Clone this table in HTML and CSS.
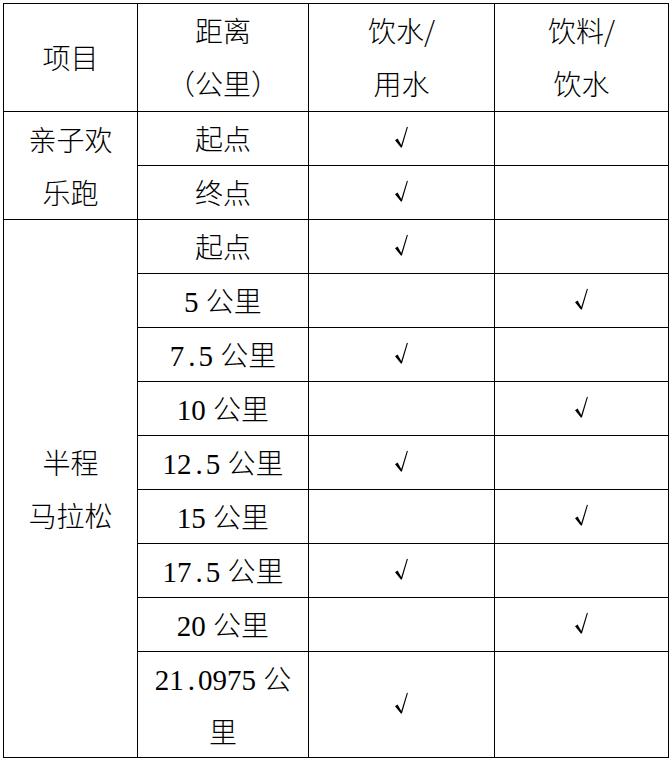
FILE: index.html
```html
<!DOCTYPE html>
<html lang="zh-CN">
<head>
<meta charset="utf-8">
<title>补给站</title>
<link rel="stylesheet" href="styles.css">
</head>
<body>
<svg class="defs" width="0" height="0" aria-hidden="true">
  <defs>
    <symbol id="tick" viewBox="0 0 15 22">
      <path d="M1 14.2 L3.6 12.6 L7.3 19 L12.9 0.8 L13.9 1.1 L7.9 21.6 L6.9 21.6 Z" fill="#000"/>
    </symbol>
  </defs>
</svg>
<table class="grid">
  <colgroup>
    <col class="c1"><col class="c2"><col class="c3"><col class="c4">
  </colgroup>
  <thead>
    <tr class="head">
      <th>项目</th>
      <th>距离<br>（公里）</th>
      <th>饮水/<br>用水</th>
      <th>饮料/<br>饮水</th>
    </tr>
  </thead>
  <tbody>
    <tr>
      <td rowspan="2">亲子欢<br>乐跑</td>
      <td>起点</td>
      <td><svg class="tick"><use href="#tick"/></svg></td>
      <td></td>
    </tr>
    <tr>
      <td>终点</td>
      <td><svg class="tick"><use href="#tick"/></svg></td>
      <td></td>
    </tr>
    <tr>
      <td rowspan="9">半程<br>马拉松</td>
      <td>起点</td>
      <td><svg class="tick"><use href="#tick"/></svg></td>
      <td></td>
    </tr>
    <tr>
      <td><span class="num">5 </span>公里</td>
      <td></td>
      <td><svg class="tick"><use href="#tick"/></svg></td>
    </tr>
    <tr>
      <td><span class="num">7<span class="dot">.</span>5 </span>公里</td>
      <td><svg class="tick"><use href="#tick"/></svg></td>
      <td></td>
    </tr>
    <tr>
      <td><span class="num">10 </span>公里</td>
      <td></td>
      <td><svg class="tick"><use href="#tick"/></svg></td>
    </tr>
    <tr>
      <td><span class="num">12<span class="dot">.</span>5 </span>公里</td>
      <td><svg class="tick"><use href="#tick"/></svg></td>
      <td></td>
    </tr>
    <tr>
      <td><span class="num">15 </span>公里</td>
      <td></td>
      <td><svg class="tick"><use href="#tick"/></svg></td>
    </tr>
    <tr>
      <td><span class="num">17<span class="dot">.</span>5 </span>公里</td>
      <td><svg class="tick"><use href="#tick"/></svg></td>
      <td></td>
    </tr>
    <tr>
      <td><span class="num">20 </span>公里</td>
      <td></td>
      <td><svg class="tick"><use href="#tick"/></svg></td>
    </tr>
    <tr class="tall">
      <td><span class="num">21<span class="dot">.</span>0975 </span>公<br>里</td>
      <td><svg class="tick"><use href="#tick"/></svg></td>
      <td></td>
    </tr>
  </tbody>
</table>
</body>
</html>
```

FILE: styles.css
```css
html, body {
  margin: 0;
  padding: 0;
  background: #ffffff;
}

body {
  padding: 3px 0 0 3px;
  font-family: "Noto Sans CJK SC", "Noto Sans", sans-serif;
  font-weight: 300;
  color: #000000;
}

.defs {
  position: absolute;
  width: 0;
  height: 0;
  overflow: hidden;
}

.grid {
  border-collapse: collapse;
  table-layout: fixed;
  width: 665px;
}

.c1 { width: 134px; }
.c2 { width: 171px; }
.c3 { width: 186px; }
.c4 { width: 174px; }

.grid th,
.grid td {
  border: 1px solid #000000;
  padding: 0 7px;
  font-size: 28px;
  line-height: 53px;
  font-weight: 300;
  text-align: center;
  vertical-align: middle;
  white-space: nowrap;
}

.head th {
  padding-bottom: 1px;
}

.tall td {
  line-height: 52.5px;
}

.num {
  font-family: "Liberation Serif", "Times New Roman", serif;
  font-size: 29px;
  line-height: 1;
  font-weight: 400;
}

.dot {
  padding-left: 4px;
  letter-spacing: 3px;
}

.tick {
  display: block;
  width: 15px;
  height: 22px;
  margin: -2px auto 2px;
}
```
